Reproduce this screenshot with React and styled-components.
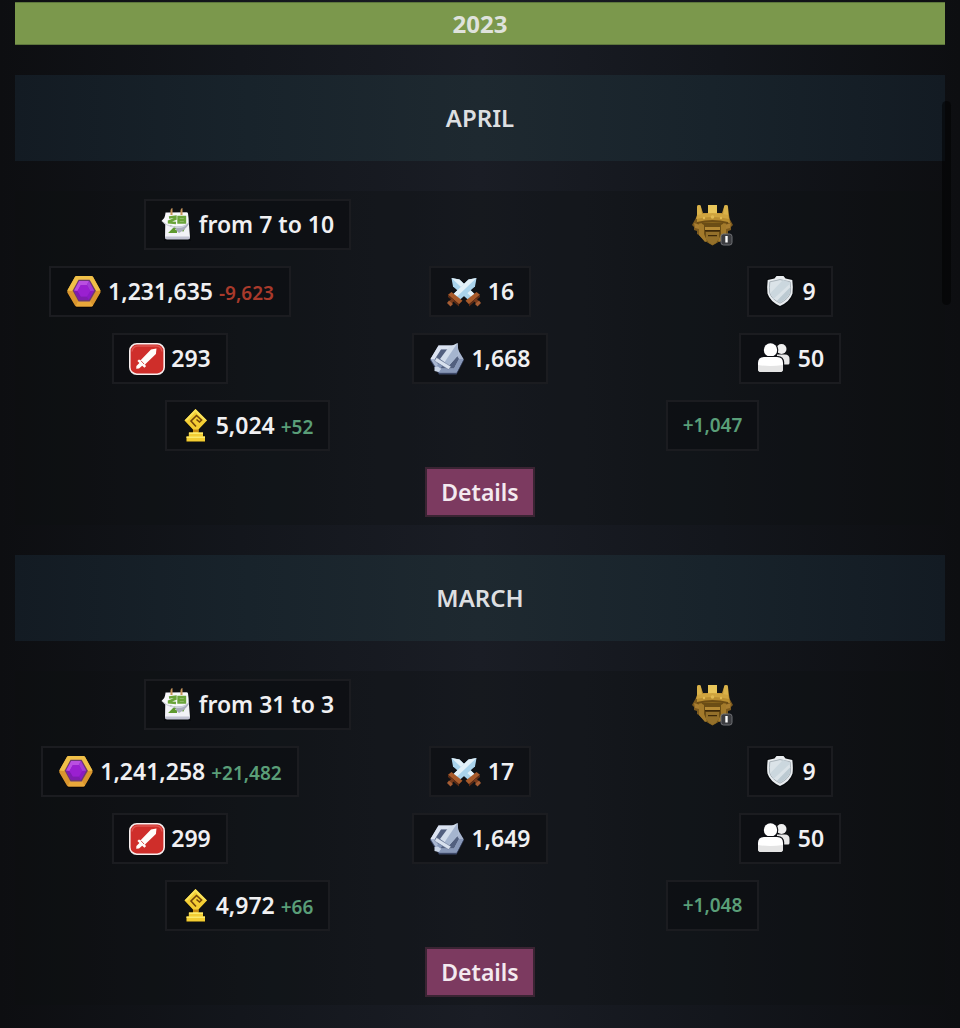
import React from 'react';
import styled, { createGlobalStyle } from 'styled-components';

const months = [
  {
    name: 'April',
    dates: 'from 7 to 10',
    points: '1,231,635',
    pointsDiff: '-9,623',
    wars: '16',
    defenses: '9',
    attacks: '293',
    medals: '1,668',
    members: '50',
    trophies: '5,024',
    trophiesDiff: '+52',
    total: '+1,047',
  },
  {
    name: 'March',
    dates: 'from 31 to 3',
    points: '1,241,258',
    pointsDiff: '+21,482',
    wars: '17',
    defenses: '9',
    attacks: '299',
    medals: '1,649',
    members: '50',
    trophies: '4,972',
    trophiesDiff: '+66',
    total: '+1,048',
  },
];

export default function App() {
  return (
    <>
      <GlobalStyle />
      <Page>
        <Year>2023</Year>
        {months.map((month) => (
          <Month key={month.name} {...month} />
        ))}
      </Page>
      <ScrollThumb />
    </>
  );
}

function Month(props) {
  return (
    <section>
      <MonthTitle>{props.name}</MonthTitle>
      <Stats>
        <Row>
          <Stat icon={<CalendarIcon />} value={props.dates} />
          <League>
            <LeagueIcon />
          </League>
        </Row>
        <Row>
          <Stat icon={<GemIcon />} value={props.points} diff={props.pointsDiff} />
          <Stat icon={<SwordsIcon />} value={props.wars} />
          <Stat icon={<ShieldIcon />} value={props.defenses} />
        </Row>
        <Row>
          <Stat icon={<AttackIcon />} value={props.attacks} />
          <Stat icon={<MedalIcon />} value={props.medals} />
          <Stat icon={<MembersIcon />} value={props.members} />
        </Row>
        <Row>
          <Stat
            icon={<TrophyIcon />}
            value={props.trophies}
            diff={props.trophiesDiff}
          />
          <Stat diff={props.total} />
        </Row>
        <Row>
          <DetailsButton type='button'>Details</DetailsButton>
        </Row>
      </Stats>
    </section>
  );
}

function Stat({ icon, value, diff }) {
  return (
    <Cell>
      <Chip>
        {icon}
        <Values>
          {value && <span>{value}</span>}
          {diff && <Diff $down={diff.startsWith('-')}>{diff}</Diff>}
        </Values>
      </Chip>
    </Cell>
  );
}

function CalendarIcon() {
  return (
    <svg width='32' height='36' viewBox='0 0 32 36' aria-hidden='true'>
      <path d='M4 6h23l3 28H3z' fill='#05060a' opacity='.6' />
      <path d='M4.500 5.500h21q1.500 0 1.600 1.500L29 30q0 2-2 2H6q-2 0-2-2z' fill='#f3f3f7' />
      <path d='M4 29.500h25v.5q0 2.500-2 2.500H6q-2 0-2-2z' fill='#c2c3d2' />
      <path
        d='M9 18h6v2l-4.500 4.500H16M18 18h6l-3 6'
        fill='none'
        stroke='#5f9a2e'
        strokeWidth='2.800'
      />
      <path d='M27 8l1 9q-4 6-10 9-3-2-4-6z' fill='#a9adbb' />
      <path d='M5 6l21.500-.5q1 6 .5 10.500-4 4-13 3.500Q5 18 .5 14 4 11 5 6z' fill='#f8f8fb' />
      <path d='M.5 14q5 4 13.500 5.500 9 .5 13-3.500-3 5.500-11 5Q5 20 .5 14z' fill='#cfd2dd' />
      <path
        d='M8 10.500l6.500-.8v2.200l-6.500 2.500v1l7 .6M17.500 10h6.500v5.500h-6.500zM17.500 12.800h6.500'
        fill='none'
        stroke='#6aa43a'
        strokeWidth='2.400'
      />
      <path d='M10.500 8V3.500q0-1.500 1-1.500M20.500 8V3.500q0-1.500 1-1.500' fill='none' stroke='#c9965c' strokeWidth='2' />
    </svg>
  );
}

function GemIcon() {
  return (
    <svg width='36' height='34' viewBox='0 0 36 34' aria-hidden='true'>
      <path d='M10 3h16l9 14.500L26 33H10L1 17.500z' fill='#090606' />
      <path d='M10.500 1h15q1 0 1.600 1l7.400 13.500v2L27 30.500q-.5 1-1.600 1h-15q-1 0-1.500-1L1.300 17.500v-2L8.900 2q.5-1 1.600-1z' fill='#d9952e' />
      <path d='M10.500 1h15q1 0 1.600 1l7.400 13.500-4.500.5-6-10H12L6 16l-4.700-.5L8.900 2q.5-1 1.600-1z' fill='#f0c048' />
      <path d='M10 30.500L12 26h12l3 4.500q-.5 1-1.600 1h-15z' fill='#e9a83a' />
      <path d='M12.500 4.800h11.200l6.200 11-6.200 10.700H12.500L6.700 15.800z' fill='#6c3a72' />
      <path d='M13.200 6h9.700l5.300 9.800-5.300 9.200h-9.700L8 15.800z' fill='#8b1ac4' />
      <path d='M13.200 6h9.700l-2 4h-6L11.500 16 8 15.800z' fill='#b94fe0' />
      <path d='M22.900 6l5.300 9.800-4 .2-3.300-6z' fill='#a23bd4' />
      <path d='M8 15.800l3.500.2 3.400 5.500h6l2 3.500h-9.700z' fill='#7f1cae' />
      <path d='M14.900 10h6l3.300 6-3.300 5.500h-6L11.500 16z' fill='#9a20d0' />
    </svg>
  );
}

function Sword() {
  return (
    <>
      <path d='M5.500 2l8 1.500L29 18.500l-6 6L7 10.500z' fill='#a9d3ec' />
      <path d='M5.500 2l8 1.500L29 18.500l-3 3z' fill='#e2f1f9' />
      <path d='M30.500 16l3.500 2.800-11 9.400-3.500-3.400z' fill='#a85a2a' />
      <path d='M34 18.800v2.200L23 30.500v-2.300z' fill='#5e2d16' />
      <path d='M27.500 24.500l2.500-2.200 3 3-2.600 2.500z' fill='#783b1c' />
      <path d='M29 28l4-3.500 2 2.500-3.500 3.500z' fill='#a65d34' />
    </>
  );
}

function SwordsIcon() {
  return (
    <svg width='36' height='32' viewBox='0 0 36 32' aria-hidden='true'>
      <Sword />
      <g transform='matrix(-1 0 0 1 36 0)'>
        <Sword />
      </g>
    </svg>
  );
}

function ShieldIcon() {
  return (
    <svg width='32' height='34' viewBox='0 0 32 34' aria-hidden='true'>
      <path d='M12 0h8l2 2.500 7 1.500q1.500 9 .5 15-3 9-13.500 13.500Q5.500 28 2.500 19q-1-6 .5-15l7-1.500z' fill='#07090c' />
      <path d='M12.500 1h7l2 2.500L28.300 5q1 8 .2 13.500Q26 26.500 16 31 6 26.500 3.500 18.500 2.700 13 3.700 5l6.800-1.500z' fill='#e8ecef' />
      <path d='M12 5.500q4-2 8 0l6.200 1.300q.7 6.200.2 11Q24.500 24 16 28.200 7.500 24 5.600 17.800q-.5-4.800.2-11z' fill='#dbe3e8' stroke='#9aa5ac' strokeWidth='.8' />
      <path d='M6.500 18L19 5q3 1.500 6.500 2.200v2L9.500 24z' fill='#cbd7de' />
      <path d='M25.900 12.500q.3 3-.1 5.300Q24 23.300 16 27.500q-1.500-.8-3-1.800z' fill='#bccad2' />
    </svg>
  );
}

function AttackIcon() {
  return (
    <svg width='36' height='34' viewBox='0 0 36 34' aria-hidden='true'>
      <rect x='.8' y='1.800' width='34.400' height='30.400' rx='7' fill='#cf2e2a' stroke='#f6eeee' strokeWidth='1.600' />
      <path d='M3 9.500Q3.500 4 9 4h18q5.500 0 6 5.500' fill='none' stroke='#dd5550' strokeWidth='1.400' />
      <path
        d='M27.500 6.500l-.6 5.500L16 22.500l1 1.700-1.600 1.500-2.200-2-3.200 2.800-2.800.2.200-2.800 3-2.900-2-2 1.500-1.600 1.700.8L22 7.500z'
        fill='#fffdfa'
      />
      <path d='M12 18.800l3.200 3.400' stroke='#cf2e2a' strokeWidth='.8' />
    </svg>
  );
}

function MedalIcon() {
  return (
    <svg width='36' height='34' viewBox='0 0 36 34' aria-hidden='true'>
      <path d='M9.500 4.500h17L35 18l-7.500 14.500H10L1 18z' fill='#3c4868' />
      <path d='M9.500 3.500h17L34.500 17l-7 13.500H10L1.500 17z' fill='#a8b6d0' />
      <path d='M9.500 3.500h17l-2.500 4H12L6 17H1.500z' fill='#dce4f2' />
      <path d='M24 7.500L30 17l-5 9.500H12L6 17l6-9.500z' fill='#52607f' />
      <path d='M30 17h4.500l-7 13.500-2.500-4zM12 26.500h13l2.500 4H10z' fill='#8898b8' />
      <path d='M19.500 5.500L28.500 1l1.200 11.500L20 23.500l-9-6.500z' fill='#d3deec' />
      <path d='M28.500 1l1.200 11.500L20 23.500l-4.500-3.200z' fill='#a5b5cf' />
      <path d='M7.500 15.500l14.500 9-2.500 3-14-8.500z' fill='#d8e1ee' stroke='#5c6b8b' strokeWidth='.5' />
      <path d='M9.500 21.500l4 2.500-3.500 3.500-3-2z' fill='#8496b8' />
      <path d='M5.500 25l3.500-.5 3 2.500-2.500 3-4-1z' fill='#c9d5e7' />
    </svg>
  );
}

function MembersIcon() {
  return (
    <svg width='36' height='34' viewBox='0 0 36 34' aria-hidden='true'>
      <circle cx='25.500' cy='7' r='5' fill='#efefef' />
      <path d='M21 12.500h8q4.500 0 4.500 4.500v4q0 1.500-1.500 1.500H21z' fill='#e7e7e7' />
      <circle cx='14.500' cy='8' r='7.800' fill='#0e1015' />
      <circle cx='14.500' cy='8' r='6.700' fill='#fff' />
      <rect x='.8' y='14' width='27.400' height='17' rx='6' fill='#0e1015' />
      <path d='M8 15h13q6 0 6 6v6q0 3-3 3H5q-3 0-3-3v-6q0-6 6-6z' fill='#fff' />
      <path d='M2 23q12 2 25 0v4q0 3-3 3H5q-3 0-3-3z' fill='#e4e4e4' />
    </svg>
  );
}

function TrophyIcon() {
  return (
    <svg width='28' height='36' viewBox='0 0 28 36' aria-hidden='true'>
      <path d='M13 1.500l11.500 11-7.500 9v3.500h4.500v4l2.500 5H4v-5l2.500-1v-3.500l3-1.500v-2l-7-8.500z' fill='#130e03' />
      <path d='M13.500 1L25 12.500l-8.500 9v3h4.500v4h2v5H4.500v-5h2.300v-4H11v-3L2.500 12.500z' fill='#f3cd33' />
      <path d='M13.500 1L25 12.500h-3L13.500 4 5.500 12.500h-3z' fill='#fbe35a' />
      <path d='M7 24.500h14v1.600H7zM4.500 28.500H23v1.600H4.500z' fill='#fbea6c' />
      <path d='M16.500 21.500V24H11v-2.500z' fill='#c68a12' />
      <path d='M14 18.500l-5-5.500 5.500-5.500 5 4.500-2 2-3-2.500' fill='none' stroke='#72450b' strokeWidth='1.600' />
    </svg>
  );
}

function LeagueIcon() {
  return (
    <svg width='44' height='44' viewBox='0 0 44 44' role='img' aria-label='Champion League I'>
      <path d='M6 13l4 2v18l-4-2v-3l-3-1v-3l-2-2zM37 13l-4 2v18l4-2v-3l3-1v-3l2-2z' fill='#7d5a1e' />
      <path d='M3 20l6 2-1 4-4-1zM40 20l-6 2 1 4 4-1z' fill='#a87d30' />
      <path d='M8 17h27v15l-6 6-7.500 4.500L14 38l-6-6z' fill='#8c681f' />
      <path d='M11 20h21v11l-4 7-6.500 4-6.500-4-4-7z' fill='#6b4d15' />
      <path d='M8 19l5 3v9l3 7-2 1-6-7zM35 19l-5 3v9l-3 7 2 1 6-7z' fill='#a37a2b' />
      <path d='M14 24h15v3H14z' fill='#b58a35' />
      <path d='M15 29h13v7l-3 4-3.500 2-3.500-2-3-4z' fill='#94702a' />
      <path d='M14 27h15v1.500H14zM17 32h9v1.200h-9z' fill='#3d290a' />
      <path d='M6 4q0-2 2-2t2 2l2 6h5V2h9v8h5l2-6q0-2 2-2t2 2l2 16q-16-4-33 0z' fill='#b98e31' />
      <path d='M17 2h9v10h-9z' fill='#e9c65a' />
      <path d='M6 4q0-2 2-2t2 2l1 8H6zM33 4q0-2 2-2t2 2v8h-5z' fill='#d9b24a' />
      <path d='M6 12q15.500-4 31 0l1 4q-16-4-33 0z' fill='#cfa43e' />
      <path d='M6 19q15.500-4 31 0v2q-15.500-4-31 0z' fill='#6d4d15' />
      <circle cx='21.500' cy='14' r='1.800' fill='#e2bb52' />
      <circle cx='13' cy='15' r='1.200' fill='#e2bb52' />
      <circle cx='30' cy='15' r='1.200' fill='#e2bb52' />
      <rect x='30' y='31' width='11' height='11' rx='2.500' fill='#3b3c40' stroke='#6f7074' />
      <path d='M35.500 33v6.500' stroke='#fff' strokeWidth='2.400' />
    </svg>
  );
}

const GlobalStyle = createGlobalStyle`
  * {
    box-sizing: border-box;
  }
  body {
    margin: 0;
    min-height: 100vh;
    font-family: 'Noto Sans', 'Open Sans', sans-serif;
    color: #f0f0f2;
    background: linear-gradient(90deg, #0d0e11 0%, #13161c 25%, #1a1d25 50%, #13161c 75%, #0d0e11 100%);
  }
`;

const Page = styled.main`
  padding: 2px 15px 0;
`;

const Year = styled.h1`
  margin: 0 0 30px;
  border: 1px solid #5d763c;
  border-width: 1px 0;
  font-size: 24px;
  line-height: 41px;
  text-align: center;
  color: #dfe2dc;
  background: #7b984c;
`;

const MonthTitle = styled.h2`
  margin: 0;
  font-size: 24px;
  font-weight: 600;
  line-height: 86px;
  text-align: center;
  text-transform: uppercase;
  color: #dddfe1;
  background: linear-gradient(90deg, #131b23 0%, #18232b 25%, #1e2930 50%, #18232b 75%, #131b23 100%);
`;

const Stats = styled.div`
  display: flex;
  flex-direction: column;
  gap: 16px;
  margin: 30px 0;
  padding: 8px 0;
  background: rgba(14, 16, 18, 0.3);
`;

const Row = styled.div`
  display: flex;
  justify-content: center;
`;

const Cell = styled.div`
  display: flex;
  flex: 1;
  justify-content: center;
`;

const Chip = styled.div`
  display: flex;
  align-items: center;
  gap: 6px;
  height: 51px;
  padding: 0 15px;
  border: 2px solid #1b1c20;
  font-size: 23px;
  font-weight: 600;
  white-space: nowrap;
  background: rgba(12, 13, 17, 0.6);
`;

const Values = styled.span`
  display: flex;
  align-items: baseline;
  gap: 6px;
  padding-bottom: 2px;
`;

const Diff = styled.span`
  font-size: 19px;
  color: ${({ $down }) => ($down ? '#a93a2b' : '#5a9e78')};
`;

const League = styled(Cell)`
  align-items: center;
`;

const DetailsButton = styled.button`
  height: 50px;
  padding: 0 14px;
  border: 2px solid #3a2433;
  font: inherit;
  font-size: 23px;
  font-weight: 600;
  color: #f3e9ef;
  background: #7c3a60;
  cursor: pointer;
`;

const ScrollThumb = styled.div`
  position: absolute;
  top: 101px;
  right: 9px;
  width: 9px;
  height: 204px;
  border-radius: 5px;
  background: rgba(0, 0, 0, 0.5);
`;
